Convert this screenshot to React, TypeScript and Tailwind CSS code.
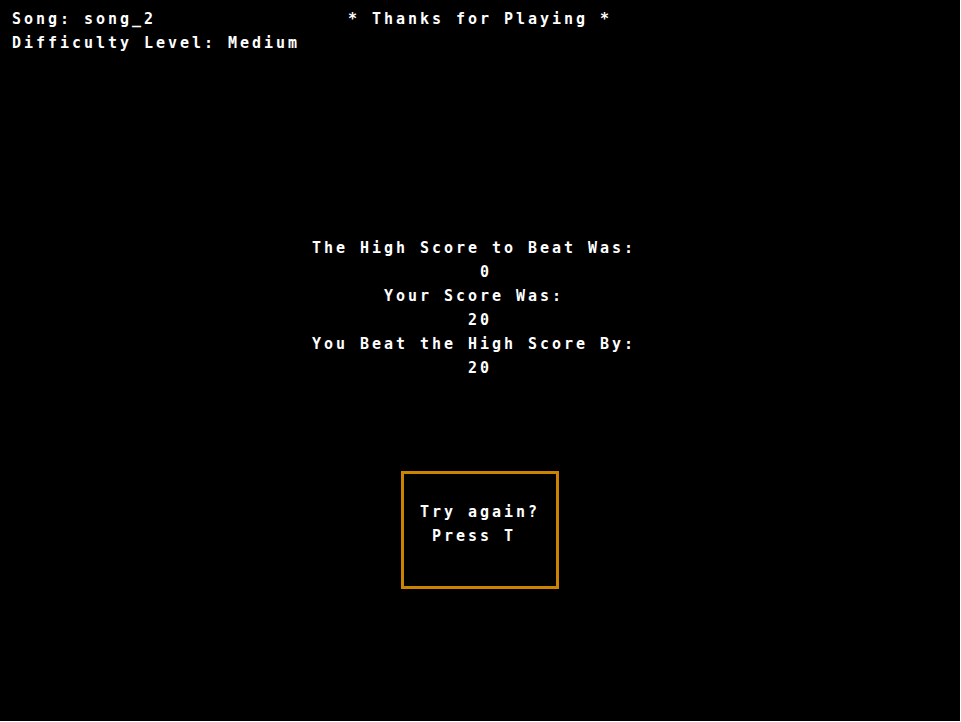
import React from 'react';

const font = {
  fontFamily: '"DejaVu Sans Mono", "Liberation Mono", monospace',
};

const Line: React.FC<{ text: string }> = ({ text }) => (
  <div className="whitespace-pre">{text}</div>
);

export default function App() {
  const results = [
    'The High Score to Beat Was: ',
    ' 0',
    'Your Score Was: ',
    '20',
    'You Beat the High Score By: ',
    '20',
  ];

  return (
    <div className="min-h-screen w-full bg-white">
      <div
        className="flex h-[721px] w-[960px] flex-col bg-black text-[15px] leading-[24px] font-bold tracking-[2.97px] text-white"
        style={font}
      >
        {/* header */}
        <div className="grid grid-cols-[1fr_auto_1fr] pt-[7px]">
          <div className="pl-3">
            <Line text="Song: song_2" />
            <Line text="Difficulty Level: Medium" />
          </div>
          <Line text="* Thanks for Playing *" />
          <div />
        </div>

        {/* score summary */}
        <div className="mt-[181px] flex flex-col items-center text-center">
          {results.map((r, i) => (
            <Line key={i} text={r} />
          ))}
        </div>

        {/* retry box */}
        <div className="mx-auto mt-[91px] flex h-[118px] w-[158px] flex-col items-center border-[3px] border-[#cc8400] pt-[26px] text-center">
          <Line text="Try again?" />
          <Line text="Press T " />
        </div>
      </div>
    </div>
  );
}
